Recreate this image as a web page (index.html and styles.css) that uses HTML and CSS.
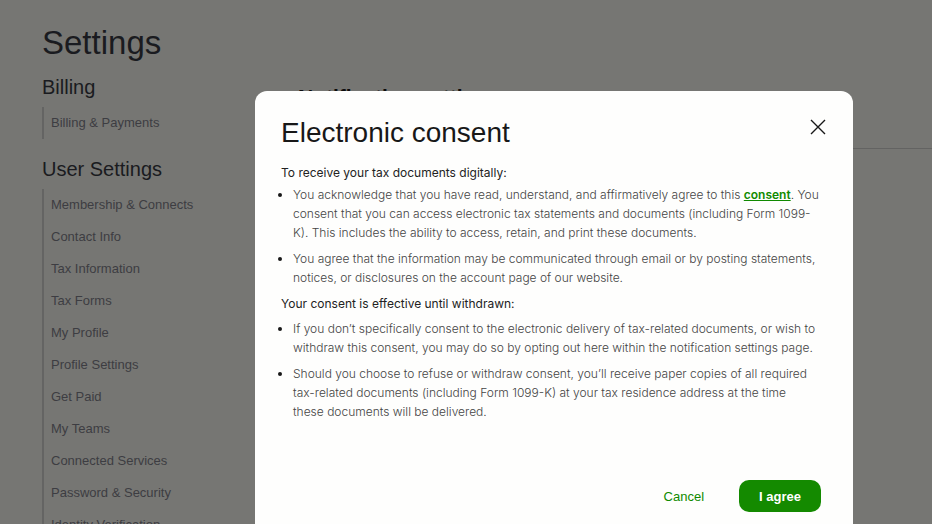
FILE: index.html
```html
<!DOCTYPE html>
<html lang="en">
<head>
<meta charset="utf-8">
<meta name="viewport" content="width=device-width, initial-scale=1">
<title>Settings</title>
<link rel="stylesheet" href="styles.css">
</head>
<body>
<div class="page">
  <aside class="sidebar">
    <h1 class="page-title">Settings</h1>
    <nav aria-label="Settings">
      <h2 class="nav-heading">Billing</h2>
      <ul class="nav-list">
        <li><a href="#">Billing &amp; Payments</a></li>
      </ul>
      <h2 class="nav-heading">User Settings</h2>
      <ul class="nav-list">
        <li><a href="#">Membership &amp; Connects</a></li>
        <li><a href="#">Contact Info</a></li>
        <li><a href="#">Tax Information</a></li>
        <li><a href="#">Tax Forms</a></li>
        <li><a href="#">My Profile</a></li>
        <li><a href="#">Profile Settings</a></li>
        <li><a href="#">Get Paid</a></li>
        <li><a href="#">My Teams</a></li>
        <li><a href="#">Connected Services</a></li>
        <li><a href="#">Password &amp; Security</a></li>
        <li><a href="#">Identity Verification</a></li>
      </ul>
    </nav>
  </aside>
  <main class="content">
    <h2 class="content-title">Notification settings</h2>
  </main>
</div>
<div class="overlay">
  <section class="modal" role="dialog" aria-modal="true" aria-labelledby="consent-title">
    <header class="modal-header">
      <h2 class="modal-title" id="consent-title">Electronic consent</h2>
      <button class="close" type="button" aria-label="Close">
        <svg viewBox="0 0 16 16" width="16" height="16" aria-hidden="true"><path d="M1 1l14 14M15 1L1 15"/></svg>
      </button>
    </header>
    <div class="modal-body">
      <p class="lead">To receive your tax documents digitally:</p>
      <ul class="terms">
        <li>You acknowledge that you have read, understand, and affirmatively agree to this <a href="#">consent</a>. You consent that you can access electronic tax statements and documents (including Form 1099-K). This includes the ability to access, retain, and print these documents.</li>
        <li>You agree that the information may be communicated through email or by posting statements, notices, or disclosures on the account page of our website.</li>
      </ul>
      <p class="lead">Your consent is effective until withdrawn:</p>
      <ul class="terms">
        <li>If you don’t specifically consent to the electronic delivery of tax-related documents, or wish to withdraw this consent, you may do so by opting out here within the notification settings page.</li>
        <li>Should you choose to refuse or withdraw consent, you’ll receive paper copies of all required tax-related documents (including Form 1099-K) at your tax residence address at the time these documents will be delivered.</li>
      </ul>
    </div>
    <footer class="modal-footer">
      <button class="btn btn-text" type="button">Cancel</button>
      <button class="btn btn-primary" type="button">I agree</button>
    </footer>
  </section>
</div>
</body>
</html>
```
FILE: styles.css
```css
* { box-sizing: border-box; }

body {
  margin: 0;
  height: 100vh;
  overflow: hidden;
  background: #767673;
  color: #181818;
  font-family: "Liberation Sans", Arial, sans-serif;
}

h1, h2, p, ul { margin: 0; padding: 0; font-weight: 400; }

.page {
  display: grid;
  grid-template-columns: 256px 1fr;
  height: 100vh;
  overflow: hidden;
}

.sidebar { padding: 23px 0 0 42px; }
.page-title { font-size: 33px; line-height: 40px; margin-bottom: 12px; color: #1a1b20; }
.nav-heading { font-size: 20px; line-height: 24px; margin-bottom: 8px; color: #1a1b20; }

.nav-list {
  list-style: none;
  border-left: 2px solid #646463;
  padding-left: 7px;
  margin-bottom: 18px;
}
.nav-list a {
  display: block;
  font-size: 13px;
  line-height: 32px;
  color: #3d3d42;
  text-decoration: none;
}

.content { padding-top: 85px; }
.content-title {
  height: 64px;
  padding-left: 42px;
  border-bottom: 1px solid #636362;
  font-size: 21px;
  line-height: 24px;
  font-weight: 700;
  color: #0c0c0c;
}

.overlay {
  position: fixed;
  inset: 0;
  padding: 91px 79px 0 255px;
}
.modal {
  display: flex;
  flex-direction: column;
  min-height: 100%;
  padding: 26px 26px 12px;
  border-radius: 12px 12px 0 0;
  background: #fefefd;
}
.modal-header {
  display: flex;
  justify-content: space-between;
  align-items: flex-start;
  margin-bottom: 14px;
}
.modal-title { font-size: 28px; line-height: 32px; }
.close {
  display: flex;
  padding: 2px 1px;
  border: 0;
  background: none;
}
.close svg { fill: none; stroke: #181818; stroke-width: 1.4; }

.modal-body { flex: 1; font-family: Inter, "Liberation Sans", sans-serif; font-size: 12px; line-height: 19px; }
.lead { color: #222; }
.terms { padding: 3px 4px 0 12px; margin-bottom: 7px; font-weight: 300; color: #444; }
.terms:last-child { padding-top: 6px; padding-right: 10px; }
.terms li + li { margin-top: 7px; }
.terms li::marker { color: #181818; font-size: 13px; }
.terms a { color: #108a00; font-weight: 600; }

.modal-footer {
  display: flex;
  justify-content: flex-end;
  gap: 15px;
  padding-right: 6px;
}
.btn {
  height: 32px;
  padding: 0 20px;
  border: 0;
  border-radius: 10px;
  font-family: inherit;
  font-size: 13px;
}
.btn-text { background: none; color: #108a00; }
.btn-primary { background: #148a00; color: #fff; font-weight: 700; }
```
